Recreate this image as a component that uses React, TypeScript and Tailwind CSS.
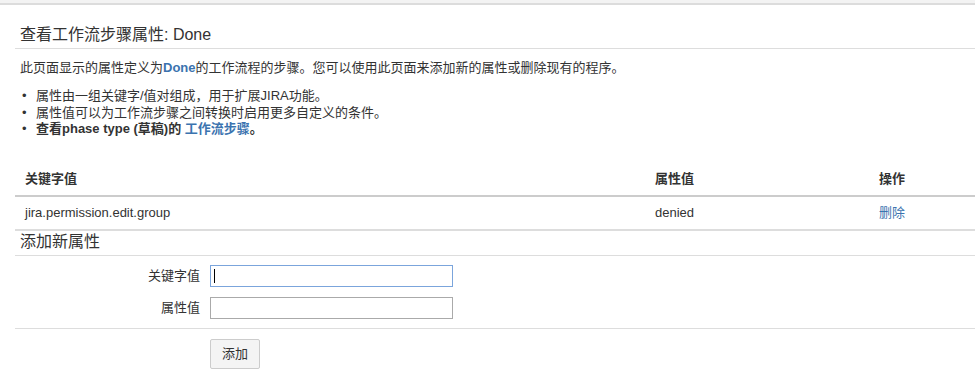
import React from 'react'

const rows = [{ key: 'jira.permission.edit.group', value: 'denied' }]

export default function App() {
  return (
    <div className="min-h-screen bg-white text-[#333] text-[13px] font-['Liberation_Sans','Noto_Sans_CJK_SC',sans-serif]">
      {/* Top rule */}
      <div className="h-[3px] bg-[#f3f3f3]" />
      <div className="h-[2px] bg-[#dcdcdc]" />

      <div className="pl-[15px]">
        {/* Title */}
        <h2 className="pt-[20px] pb-[3px] pl-[5px] text-[16px] leading-[20px] font-normal border-b border-[#ddd]">
          查看工作流步骤属性: Done
        </h2>

        <p className="mt-[10px] pl-[5px] leading-[18px]">
          此页面显示的属性定义为<b className="text-[#3b73af]">Done</b>的工作流程的步骤。您可以使用此页面来添加新的属性或删除现有的程序。
        </p>

        <ul className="mt-[11px] pl-[5px] leading-[16.5px]">
          <li className="flex">
            <span className="w-[16px] pl-[2px]">•</span>属性由一组关键字/值对组成，用于扩展JIRA功能。
          </li>
          <li className="flex">
            <span className="w-[16px] pl-[2px]">•</span>属性值可以为工作流步骤之间转换时启用更多自定义的条件。
          </li>
          <li className="flex font-bold">
            <span className="w-[16px] pl-[2px] font-normal">•</span>查看phase type (草稿)的&nbsp;
            <a className="text-[#3b73af]" href="#">工作流步骤</a>。
          </li>
        </ul>

        {/* Properties table */}
        <div className="mt-[32px]">
          <div className="grid grid-cols-[630px_224px_1fr] border-b-2 border-[#ccc] font-bold leading-[18px]">
            <div className="pl-[10px] pb-[7px]">关键字值</div>
            <div className="pl-[10px] pb-[7px]">属性值</div>
            <div className="pl-[10px] pb-[7px]">操作</div>
          </div>
          {rows.map((r) => (
            <div key={r.key} className="grid grid-cols-[630px_224px_1fr] border-b-2 border-[#ddd] leading-[18px]">
              <div className="pl-[10px] py-[7px]">{r.key}</div>
              <div className="pl-[10px] py-[7px]">{r.value}</div>
              <div className="pl-[10px] py-[7px]">
                <a className="text-[#3b73af]" href="#">删除</a>
              </div>
            </div>
          ))}
        </div>

        {/* Add new property */}
        <h3 className="pt-[1px] pb-[3px] pl-[5px] text-[16px] leading-[20px] font-normal border-b border-[#ddd]">
          添加新属性
        </h3>

        <div className="mt-[9px] flex flex-col gap-[10px]">
          <div className="flex items-center gap-[10px]">
            <label className="w-[185px] text-right">关键字值</label>
            <div className="relative">
              <input className="w-[243px] h-[22px] border border-[#7ba5dc] outline-none px-[4px]" />
              <span className="absolute left-[4px] top-[4px] h-[14px] w-px bg-black" />
            </div>
          </div>
          <div className="flex items-center gap-[10px]">
            <label className="w-[185px] text-right">属性值</label>
            <input className="w-[243px] h-[22px] border border-[#aaa] outline-none px-[4px]" />
          </div>
        </div>

        <div className="mt-[9px] border-t border-[#ddd] pt-[10px] pl-[195px]">
          <button className="w-[50px] h-[30px] bg-[#f4f4f4] border border-[#ccc] rounded-[2px] text-[13px] text-[#333]">
            添加
          </button>
        </div>
      </div>
    </div>
  )
}
